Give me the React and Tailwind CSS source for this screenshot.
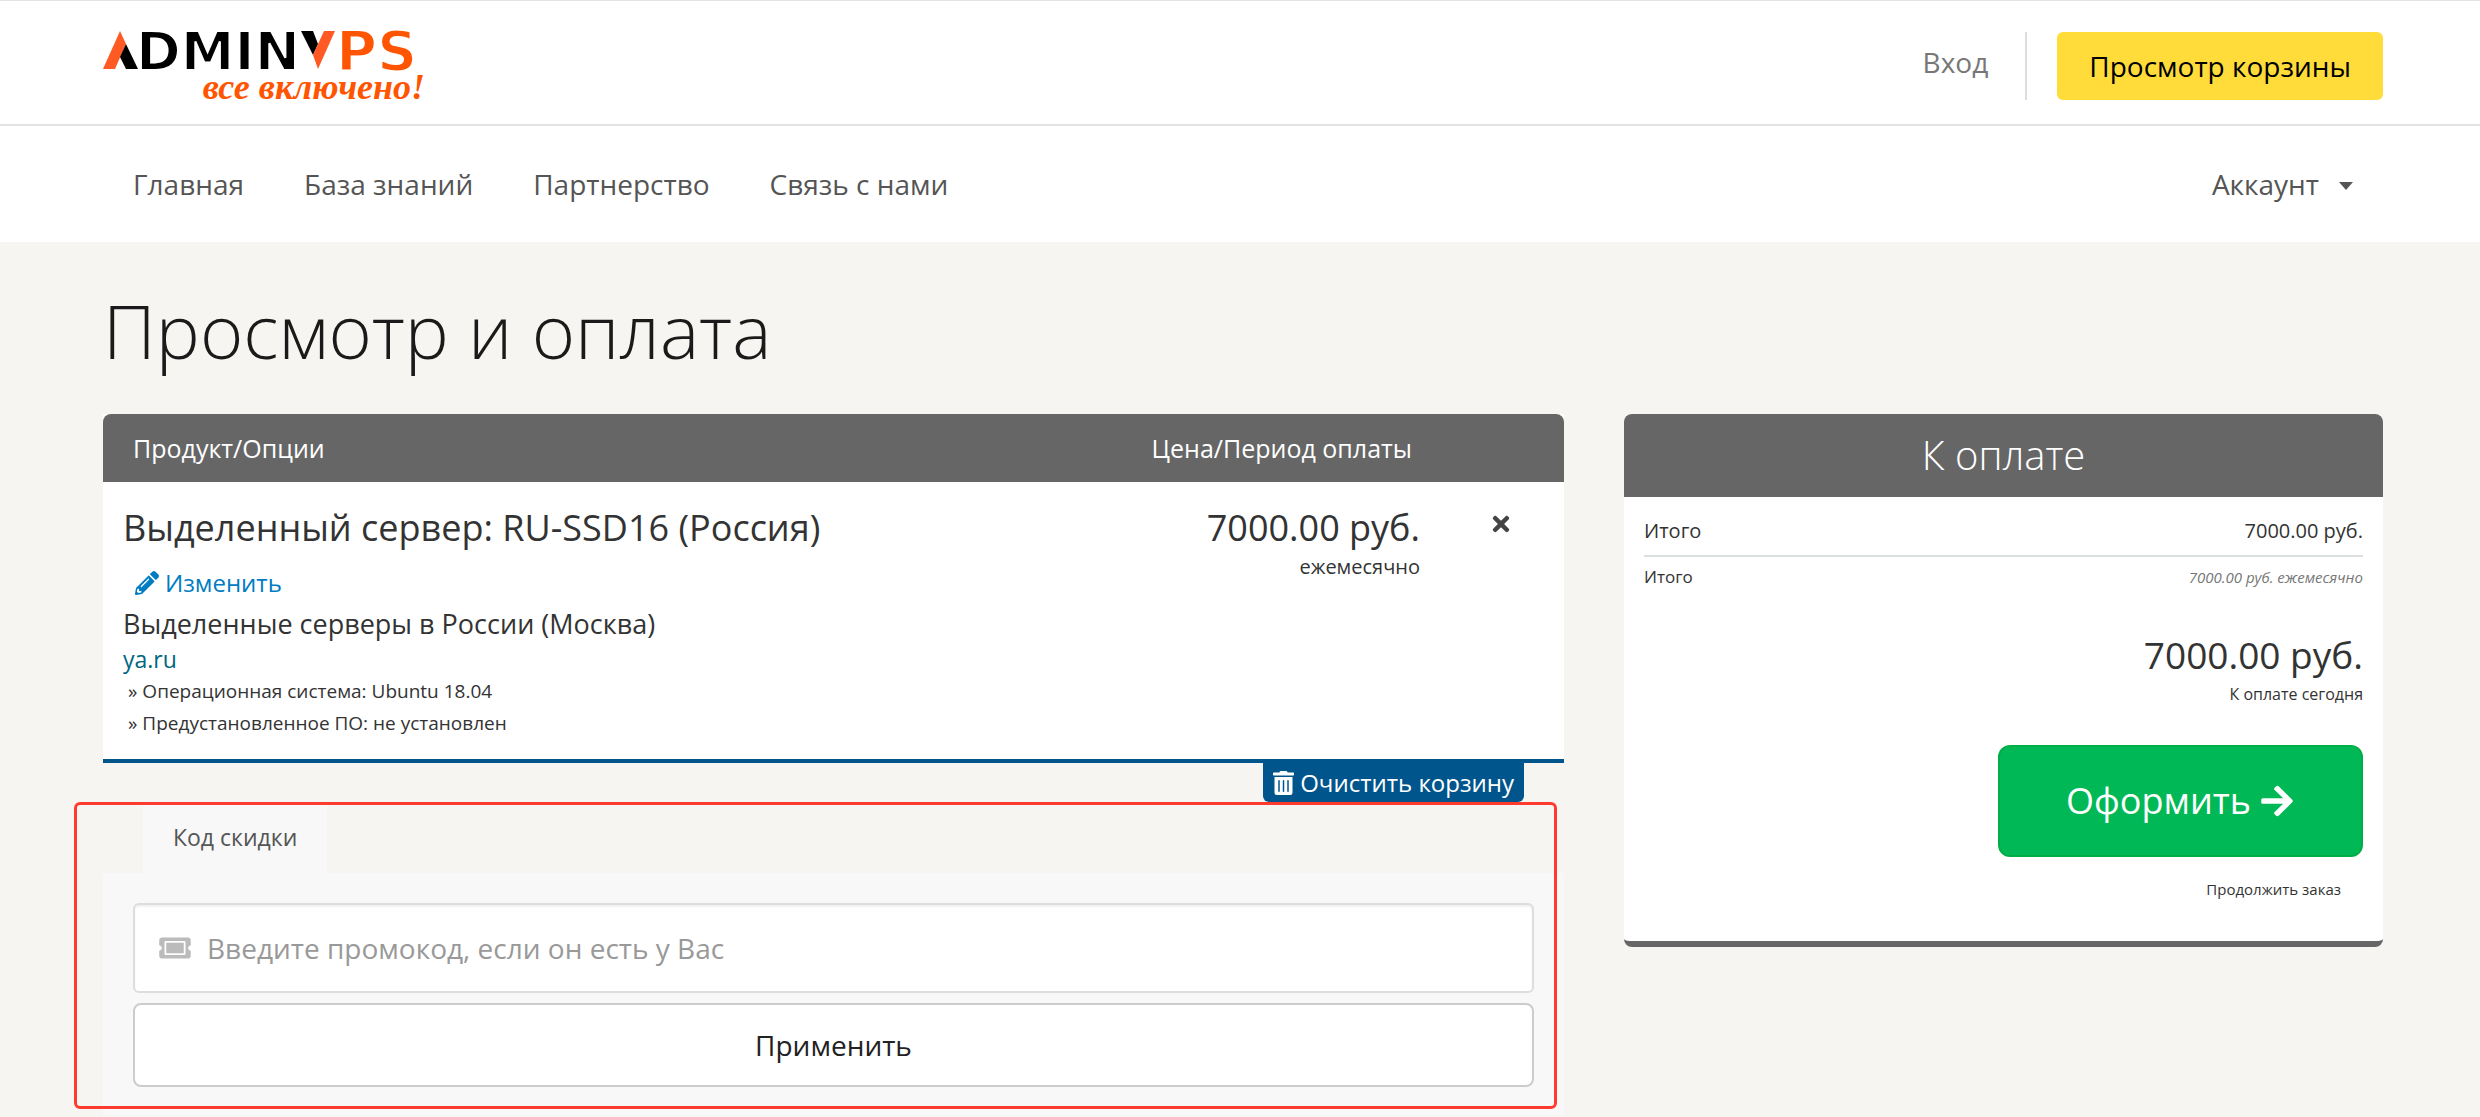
import React from "react";
import { FaArrowRight, FaPencilAlt, FaTicketAlt, FaTimes, FaTrashAlt } from "react-icons/fa";

const NAV = ["Главная", "База знаний", "Партнерство", "Связь с нами"];
const OPTIONS = ["Операционная система: Ubuntu 18.04", "Предустановленное ПО: не установлен"];

function Logo() {
  return (
    <svg viewBox="0 -12 328 104" className="h-[104px] w-[328px]" role="img" aria-label="AdminVPS">
      <text
        x="33"
        y="49"
        strokeWidth="2"
        className="fill-black stroke-white font-['DejaVu_Sans',sans-serif] text-[54px] font-bold"
      >
        DMIN
      </text>
      <text
        x="233"
        y="49"
        strokeWidth="2"
        className="fill-[#ff5500] stroke-white font-['DejaVu_Sans',sans-serif] text-[56px] font-bold"
      >
        PS
      </text>
      <polygon points="0,48 17,10 23,23 12,48" fill="#ff5a24" />
      <polygon points="23,23 35,48 23,48 17,36" fill="#000" />
      <polygon points="198,10 210,10 215,23 210,34" fill="#000" />
      <polygon points="221,10 232,10 215,48 210,34" fill="#ff5a24" />
      <text
        x="322"
        y="78"
        textAnchor="end"
        className="fill-[#ff5500] font-['Liberation_Serif',serif] text-[36px] font-bold italic"
      >
        все включено!
      </text>
    </svg>
  );
}

function Header() {
  return (
    <header className="flex justify-between border-t border-b-2 border-[#e3e3e3] bg-white pt-2 pr-[97px] pl-[103px]">
      <a href="#home">
        <Logo />
      </a>
      <div className="mt-[23px] mb-6 flex">
        <a href="#login" className="mr-[37px] pt-2 text-[28px] leading-[44px] text-[#777]">
          Вход
        </a>
        <span className="mr-[30px] h-[68px] w-[2px] bg-[#ddd]" />
        <a
          href="#cart"
          className="h-[68px] rounded-md bg-[#ffdc3a] px-8 text-[28px] leading-[68px] text-black"
        >
          Просмотр корзины
        </a>
      </div>
    </header>
  );
}

function Nav() {
  return (
    <nav className="flex h-[116px] items-center justify-between bg-white pr-[127px] pl-[133px] text-[28px] text-[#555]">
      <ul className="flex gap-[60px]">
        {NAV.map((item) => (
          <li key={item}>
            <a href="#nav">{item}</a>
          </li>
        ))}
      </ul>
      <button type="button" className="flex items-center gap-5">
        Аккаунт
        <svg viewBox="0 0 14 8" className="mt-1 h-2 w-[14px]" aria-hidden="true">
          <path d="M0 0h14L7 8z" fill="#555" />
        </svg>
      </button>
    </nav>
  );
}

function Cart() {
  return (
    <section>
      <table className="w-full border-b-4 border-[#00558c] bg-white text-[#333]">
        <thead className="text-[25px] leading-[68px] text-white">
          <tr>
            <th scope="col" className="rounded-tl-lg bg-[#666] pl-[30px] text-left font-normal">
              Продукт/Опции
            </th>
            <th scope="col" className="bg-[#666] text-right font-normal">
              <span className="pr-2">Цена/Период оплаты</span>
            </th>
            <th scope="col" className="w-[144px] rounded-tr-lg bg-[#666]" aria-label="Действия" />
          </tr>
        </thead>
        <tbody>
          <tr className="align-top">
            <td className="pt-[21px] pb-5 pl-5">
              <h2 className="text-[36px] leading-[50px]">Выделенный сервер: RU-SSD16 (Россия)</h2>
              <a
                href="#edit"
                className="mt-2 flex items-center gap-[6px] pl-3 text-[24px] leading-[44px] text-[#007cc2]"
              >
                <FaPencilAlt className="size-6" />
                Изменить
              </a>
              <p className="text-[27px] leading-[38px]">Выделенные серверы в России (Москва)</p>
              <p className="text-[23px] leading-8 text-[#006680]">ya.ru</p>
              <ul className="pl-[5px] text-[19px] leading-8">
                {OPTIONS.map((option) => (
                  <li key={option}>» {option}</li>
                ))}
              </ul>
            </td>
            <td className="pt-[21px] text-right">
              <p className="text-[36px] leading-[50px]">7000.00 руб.</p>
              <p className="text-[20px] leading-7">ежемесячно</p>
            </td>
            <td className="pt-[30px] pl-[72px]">
              <button type="button" aria-label="Удалить" className="block">
                <FaTimes className="h-6 w-[18px] text-[#444]" />
              </button>
            </td>
          </tr>
        </tbody>
      </table>
      <div className="flex justify-end pr-10">
        <button
          type="button"
          className="flex h-[39px] items-center gap-[6px] rounded-b-md bg-[#00558c] px-[10px] text-[24px] text-white"
        >
          <FaTrashAlt className="h-6 w-[21px]" />
          Очистить корзину
        </button>
      </div>

      <div className="relative">
        <div className="flex px-10" role="tablist">
          <button
            type="button"
            role="tab"
            aria-selected="true"
            className="bg-[#f8f8f8] px-[30px] text-[23px] leading-[71px] text-[#555]"
          >
            Код скидки
          </button>
        </div>
        <form className="flex flex-col gap-[10px] bg-[#f8f8f8] px-[30px] pt-[30px] pb-[29px]">
          <label className="flex h-[90px] items-center gap-4 rounded-md border-2 border-[#ddd] bg-white px-6 shadow-[inset_0_2px_2px_rgba(0,0,0,0.06)]">
            <FaTicketAlt className="h-7 w-8 text-[#bbb]" />
            <input
              type="text"
              aria-label="Промокод"
              placeholder="Введите промокод, если он есть у Вас"
              className="flex-1 bg-transparent text-[28px] outline-none placeholder:text-[#999]"
            />
          </label>
          <button
            type="button"
            className="h-[84px] rounded-lg border-2 border-[#ccc] bg-white text-[28px] text-[#222]"
          >
            Применить
          </button>
        </form>
        <div className="pointer-events-none absolute top-0 right-[7px] bottom-[7px] -left-[29px] rounded-md border-3 border-[#ff3b30]" />
      </div>
    </section>
  );
}

function Summary() {
  return (
    <aside className="self-start overflow-hidden rounded-lg border-b-6 border-[#666] bg-white text-[#333]">
      <h2 className="bg-[#666] pt-px pb-[2px] text-center text-[40px] leading-[80px] font-light text-white">
        К оплате
      </h2>
      <div className="flex flex-col px-5 pt-5 pb-10">
        <div className="flex justify-between border-b-2 border-[#dcdfdf] pb-[10px] text-[20px] leading-7">
          <span>Итого</span>
          <span>7000.00 руб.</span>
        </div>
        <div className="mt-[6px] flex justify-between text-[17px] leading-7">
          <span>Итого</span>
          <span className="text-[15px] text-[#777] italic">7000.00 руб. ежемесячно</span>
        </div>
        <p className="mt-[39px] text-right text-[37px] leading-[50px]">7000.00 руб.</p>
        <p className="text-right text-[16px] leading-7">К оплате сегодня</p>
        <button
          type="button"
          className="mt-[37px] flex h-28 items-center gap-2 self-end rounded-xl border-2 border-[#00ae48] bg-[#00b956] px-[66px] text-[36px] text-white"
        >
          Оформить
          <FaArrowRight className="size-9" />
        </button>
        <a href="#continue" className="mt-5 self-end pr-[22px] text-[15px] leading-6">
          Продолжить заказ
        </a>
      </div>
    </aside>
  );
}

export default function App() {
  return (
    <div className="min-h-screen bg-[#f6f5f1] font-['Open_Sans',sans-serif]">
      <Header />
      <Nav />
      <main className="pt-11 pr-[97px] pl-[103px]">
        <h1 className="mb-[38px] text-[74px] leading-[90px] font-light text-[#1a1a1a]">Просмотр и оплата</h1>
        <div className="grid grid-cols-[1461fr_759fr] gap-[60px]">
          <Cart />
          <Summary />
        </div>
      </main>
    </div>
  );
}
